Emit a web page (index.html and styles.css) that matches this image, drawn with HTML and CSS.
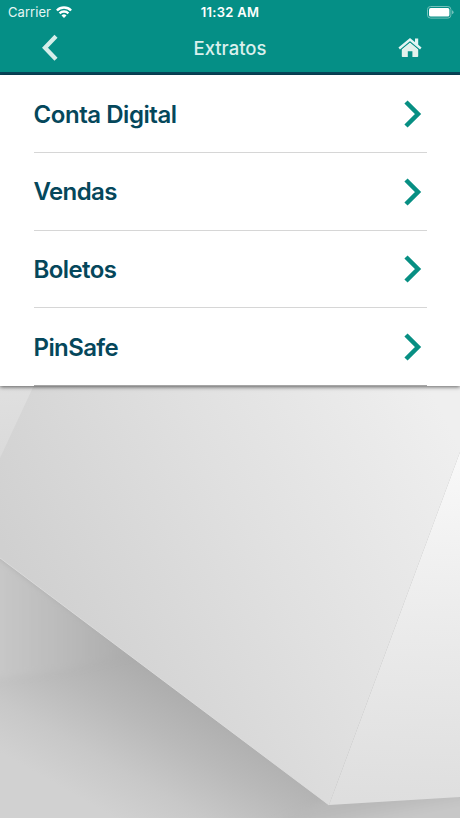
FILE: index.html
```html
<!DOCTYPE html>
<html lang="pt-BR">
<head>
<meta charset="utf-8">
<title>Extratos</title>
<link rel="stylesheet" href="styles.css">
</head>
<body>
<header class="header">
  <div class="status">
    <div class="carrier"><span>Carrier</span>
      <svg width="16" height="12" viewBox="0 0 16 12"><g fill="none" stroke="#fff" stroke-width="2.4"><path d="M.9 4.5a10 10 0 0 1 14.2 0"/><path d="M3.6 7.3a6.2 6.2 0 0 1 8.8 0"/></g><path d="M8 12 5.5 9.4a3.6 3.6 0 0 1 5 0z" fill="#fff"/></svg>
    </div>
    <time class="time">11:32 AM</time>
    <svg class="battery" width="27" height="13" viewBox="0 0 27 13"><rect x=".5" y=".5" width="23.4" height="11.6" rx="3" fill="none" stroke="#73c1bb"/><rect x="2" y="2" width="20.4" height="8.6" rx="1.7" fill="#fff"/><path d="M25 4.3q1.6.6 1.6 2t-1.6 2z" fill="#73c1bb"/></svg>
  </div>
  <nav class="nav">
    <svg class="back" width="18" height="28" viewBox="0 0 18 28"><path d="M15 2.2 4 13.7l11 11.5" fill="none" stroke="#d6eeea" stroke-width="4.3"/></svg>
    <h1 class="title">Extratos</h1>
    <svg class="home" width="24" height="20" viewBox="0 0 24 20"><path d="M12 4.3 20.2 11v7.2q0 .8-.8.8h-5v-5.8H9.8V19H4.6q-.8 0-.8-.8V11z" fill="#e3f1ec"/><path d="M1.2 10.5 12 1.6l10.8 8.9" fill="none" stroke="#058f86" stroke-width="4.4"/><path d="M1.2 10.5 12 1.6l10.8 8.9" fill="none" stroke="#e3f5f3" stroke-width="2.4"/><path d="M17 .5h3.2v7.2L17 5z" fill="#e3f5f3"/></svg>
  </nav>
</header>
<main class="menu">
  <div class="row"><span class="label conta">Conta Digital</span><svg class="chevron" width="18" height="28" viewBox="0 0 18 28"><path d="m2 2 12 12L2 26"/></svg></div>
  <div class="row"><span class="label">Vendas</span><svg class="chevron" width="18" height="28" viewBox="0 0 18 28"><path d="m2 2 12 12L2 26"/></svg></div>
  <div class="row"><span class="label">Boletos</span><svg class="chevron" width="18" height="28" viewBox="0 0 18 28"><path d="m2 2 12 12L2 26"/></svg></div>
  <div class="row"><span class="label">PinSafe</span><svg class="chevron" width="18" height="28" viewBox="0 0 18 28"><path d="m2 2 12 12L2 26"/></svg></div>
</main>
<svg class="backdrop" viewBox="0 386 460 432" preserveAspectRatio="none">
  <defs>
    <linearGradient id="face" gradientUnits="userSpaceOnUse" x1="10" y1="560" x2="410" y2="350"><stop stop-color="#d0d0d0"/><stop offset=".5" stop-color="#e0e0e0"/><stop offset="1" stop-color="#efefef"/></linearGradient>
    <linearGradient id="side" gradientUnits="userSpaceOnUse" x1="450" y1="450" x2="430" y2="805"><stop stop-color="#f9f9f9"/><stop offset=".5" stop-color="#ebebeb"/><stop offset="1" stop-color="#dedede"/></linearGradient>
    <linearGradient id="corner" gradientUnits="userSpaceOnUse" x1="0" y1="385" x2="0" y2="458"><stop stop-color="#e0e0e0"/><stop offset="1" stop-color="#dadada"/></linearGradient>
    <linearGradient id="floor" gradientUnits="userSpaceOnUse" x1="165" y1="677" x2="92" y2="805"><stop stop-color="#acacac"/><stop offset=".35" stop-color="#b9b9b9"/><stop offset=".7" stop-color="#c8c8c8"/><stop offset="1" stop-color="#d1d1d1"/></linearGradient>
    <linearGradient id="wall" gradientUnits="userSpaceOnUse" x1="0" y1="650" x2="125" y2="650"><stop stop-color="#c7c7c7"/><stop offset=".4" stop-color="#bdbdbd"/><stop offset="1" stop-color="#adadad"/></linearGradient>
    <linearGradient id="under" gradientUnits="userSpaceOnUse" x1="390" y1="800" x2="394" y2="820"><stop stop-color="#b9b9b9"/><stop offset="1" stop-color="#c7c7c7"/></linearGradient>
    <filter id="soft" x="-20%" y="-20%" width="140%" height="140%"><feGaussianBlur stdDeviation="3"/></filter>
  </defs>
  <path d="M0 385h460v433H0z" fill="url(#floor)"/>
  <path d="M-20 540 0 558l132 97-72 16-80 10z" fill="url(#wall)" filter="url(#soft)"/>
  <path d="m270 825 59-25 151-11v36z" fill="url(#under)" filter="url(#soft)"/>
  <path d="M0 385h460v67L329 805 0 558z" fill="url(#face)"/>
  <path d="M0 385h34L0 458z" fill="url(#corner)"/>
  <path d="M460 452v345l-131 8z" fill="url(#side)"/>
  <path d="m0 558 329 247" fill="none" stroke="#dfdfdf" stroke-width=".8"/>
</svg>
</body>
</html>
```
FILE: styles.css
```css
* { box-sizing: border-box; }
body {
  margin: 0;
  height: 818px;
  display: flex;
  flex-direction: column;
  overflow: hidden;
  background: #d0d0d0;
  font-family: Inter, "Liberation Sans", sans-serif;
}
svg { display: block; flex: none; }
.header {
  flex: none;
  height: 75px;
  background: #058f86;
  border-bottom: 3.5px solid #08465b;
  color: #fff;
}
.status {
  height: 24px;
  padding: 0 6px 0 8px;
  display: grid;
  grid-template-columns: 1fr auto 1fr;
  align-items: center;
  font-size: 13px;
  line-height: 24px;
}
.carrier { display: flex; align-items: center; gap: 5px; color: #e6f6f4; letter-spacing: .05px; }
.time { font-weight: 600; letter-spacing: .3px; margin-right: 2px; }
.battery { justify-self: end; }
.nav {
  height: 47px;
  padding: 0 38px 0 41px;
  display: grid;
  grid-template-columns: 1fr auto 1fr;
  align-items: center;
}
.title { margin: 0 3px 0 0; font-size: 18.5px; font-weight: 500; color: #daf0ed; line-height: 46px; letter-spacing: 0; }
.home { justify-self: end; }
.menu {
  flex: none;
  height: 311px;
  padding: 0 33.5px;
  display: grid;
  grid-template-rows: repeat(4, 1fr);
  background: #fff;
  box-shadow: 0 1px 4px #0009;
  position: relative;
  z-index: 1;
}
.row {
  display: flex;
  align-items: center;
  justify-content: space-between;
  border-bottom: 1px solid #d6d6d6;
}
.row:last-child { border-bottom-color: #a5a5a5; }
.label { padding-top: 1px; font-size: 24px; font-weight: 600; color: #05475b; letter-spacing: -.6px; }
.conta { padding-top: 2px; letter-spacing: -.45px; }
.chevron { margin: 1px 5px 0 0; fill: none; stroke: #078f83; stroke-width: 4.5; }
.backdrop { width: 100%; flex: 1; min-height: 0; }
```
